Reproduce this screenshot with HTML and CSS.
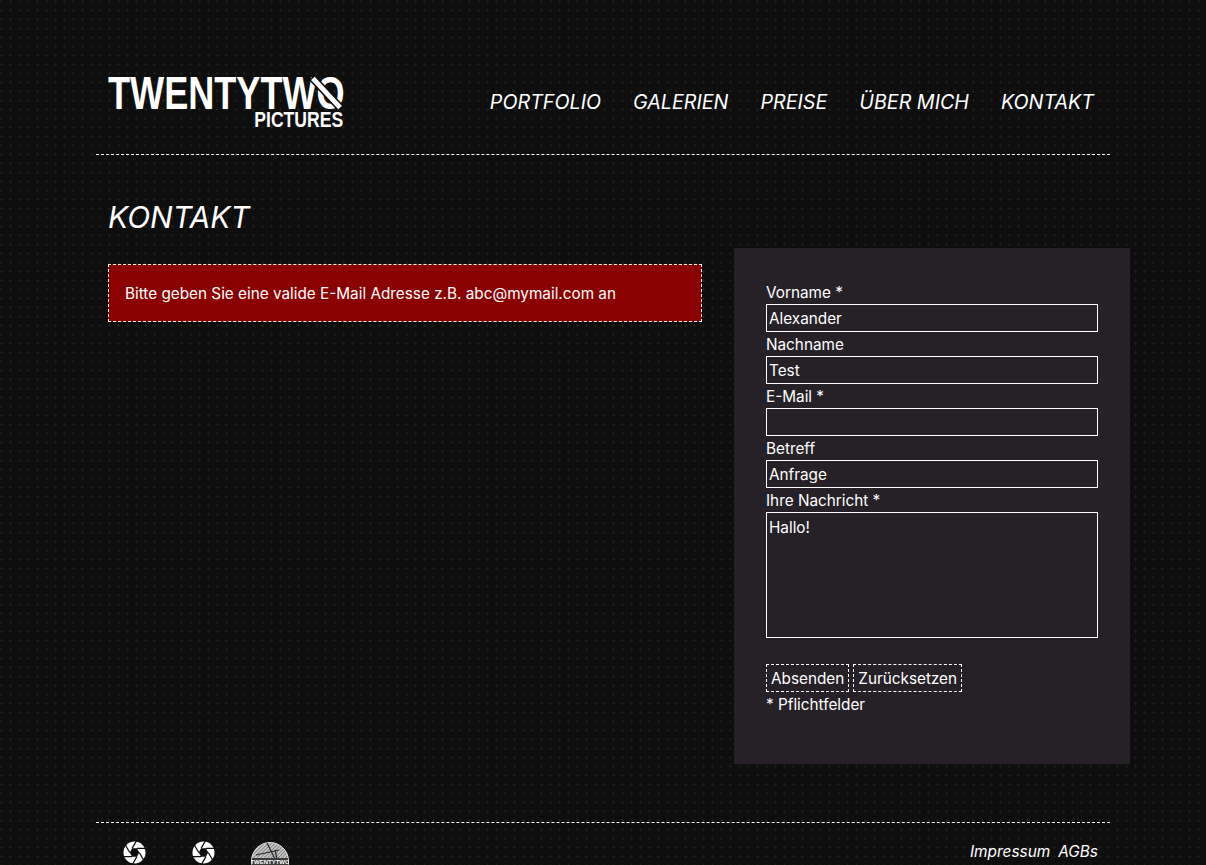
FILE: index.html
```html
<!DOCTYPE html>
<html lang="de">
<head>
<meta charset="utf-8">
<title>Kontakt</title>
<link rel="stylesheet" href="styles.css">
</head>
<body>
<div class="page">
  <header class="site-header">
    <a class="logo" href="#"><span class="logo-main">TWENTYTWO</span><span class="logo-sub">PICTURES</span></a>
    <nav class="nav">
      <a href="#">PORTFOLIO</a><a href="#">GALERIEN</a><a href="#">PREISE</a><a href="#">ÜBER MICH</a><a href="#">KONTAKT</a>
    </nav>
  </header>
  <main class="main">
    <h1 class="title">KONTAKT</h1>
    <div class="columns">
      <div class="left">
        <div class="alert">Bitte geben Sie eine valide E-Mail Adresse z.B. abc@mymail.com an</div>
      </div>
      <form class="form">
        <label class="label">Vorname *</label>
        <input class="field" type="text" value="Alexander">
        <label class="label">Nachname</label>
        <input class="field" type="text" value="Test">
        <label class="label">E-Mail *</label>
        <input class="field" type="text" value="">
        <label class="label">Betreff</label>
        <input class="field" type="text" value="Anfrage">
        <label class="label">Ihre Nachricht *</label>
        <textarea class="field area">Hallo!</textarea>
        <div class="buttons">
          <button class="btn" type="button">Absenden</button>
          <button class="btn" type="button">Zurücksetzen</button>
        </div>
        <div class="note">* Pflichtfelder</div>
      </form>
    </div>
  </main>
  <footer class="footer">
    <div class="badges">
      <svg class="aperture" viewBox="0 0 24 24"><circle cx="12" cy="12" r="11.5" fill="#fff"/><path d="M17 12 22 20.66M14.5 16.33 9.5 25M9.5 16.33H-.5M7 12 2 3.34M9.500 7.67 14.500 -1M14.5 7.67H24.500" stroke="#0d0d0d" stroke-width="1.3" fill="none"/><path d="M17 12 14.5 16.33H9.500L7 12 9.500 7.67H14.500Z" fill="#0d0d0d"/></svg>
      <svg class="aperture" viewBox="0 0 24 24"><circle cx="12" cy="12" r="11.5" fill="#fff"/><path d="M17 12 22 20.66M14.5 16.33 9.5 25M9.5 16.33H-.5M7 12 2 3.34M9.500 7.67 14.500 -1M14.5 7.67H24.500" stroke="#0d0d0d" stroke-width="1.3" fill="none"/><path d="M17 12 14.5 16.33H9.500L7 12 9.500 7.67H14.500Z" fill="#0d0d0d"/></svg>
      <svg class="seal" viewBox="0 0 38 38"><defs><pattern id="hatch" width="2.500" height="2.500" patternUnits="userSpaceOnUse" patternTransform="rotate(45)"><rect width="2.500" height="2.500" fill="#cfcfcf"/><rect width="1" height="2.500" fill="#7c7c7c"/></pattern></defs><circle cx="19" cy="19" r="18.500" fill="url(#hatch)" stroke="#ddd"/><path d="M5 13 28 8M16 1 24 17M24 8 27 21" stroke="#2a2a2a" stroke-width="1.200" fill="none"/><rect x="1" y="16" width="36" height="7" fill="#3a3a3a"/><text class="seal-text" x="19" y="22" text-anchor="middle">TWENTYTWO</text></svg>
    </div>
    <div class="legal"><a href="#">Impressum</a><a href="#">AGBs</a></div>
  </footer>
</div>
</body>
</html>
```
FILE: styles.css
```css
* { box-sizing: border-box; }
html, body { margin: 0; height: 865px; overflow: hidden; }
body {
  background-color: #0e0e0e;
  background-image: radial-gradient(circle at 1.5px 1.5px, #1e1e1e 1px, transparent 1.3px);
  background-size: 9px 9px;
  color: #fff;
  font-family: Inter, "Noto Sans", sans-serif;
  font-size: 15.3px;
}
a { color: inherit; text-decoration: none; }
.page { width: 1014px; margin-left: 96px; }
.site-header {
  height: 155px;
  border-bottom: 1px dashed #fff;
  padding: 76px 16px 0 12px;
  display: flex;
  justify-content: space-between;
  align-items: flex-start;
}
.logo { position: relative; display: flex; flex-direction: column; width: 236px; font-family: "Liberation Sans", sans-serif; font-weight: 700; }
.logo::after {
  content: "";
  position: absolute;
  left: 216px; top: -3px;
  width: 5px; height: 40px;
  background: #fff;
  box-shadow: 0 0 0 1.5px #0e0e0e;
  transform: rotate(-43deg);
}
.logo-main { font-size: 46px; height: 34px; line-height: 34px; white-space: nowrap; transform: scaleX(.785); transform-origin: 0 0; }
.logo-sub { margin: 2px 1px 0 0; font-size: 22px; height: 16px; line-height: 16px; white-space: nowrap; align-self: flex-end; transform: scaleX(.8); transform-origin: 100% 0; }
.nav { display: flex; gap: 32px; padding-top: 14px; font-size: 19.7px; font-style: italic; line-height: 24px; }
.main { padding: 0; }
.title { margin: 46px 0 0 12px; font-size: 30px; line-height: 32px; height: 47px; font-weight: 400; font-style: italic; }
.columns { display: flex; height: 516px; }
.left { flex: none; width: 638px; padding: 16px 0 0 12px; }
.alert {
  width: 594px; height: 58px;
  background: #8b0000;
  border: 1px dashed #fff;
  padding: 0 16px;
  display: flex; align-items: center;
}
.form {
  flex: none;
  width: 396px;
  background: #262127;
  padding: 32px 32px 0;
  display: flex; flex-direction: column;
}
.label { height: 24px; line-height: 25px; }
.field {
  display: block; width: 332px; height: 28px;
  background: transparent; border: 1px solid #fff; color: #fff;
  font: inherit; padding: 0 2px; margin: 0;
  outline: 0;
}
.area { height: 126px; padding-top: 5px; resize: none; line-height: 20px; }
.buttons { display: flex; gap: 4px; margin-top: 26px; }
.btn {
  height: 28px; padding: 0 4px;
  background: transparent; border: 1px dashed #fff; color: #fff;
  font: inherit;
}
.note { height: 24px; line-height: 25px; }
.footer {
  margin-top: 58px;
  border-top: 1px dashed #fff;
  padding: 18px 12px 0 27px;
  display: flex; justify-content: space-between; align-items: flex-start;
}
.badges { display: flex; align-items: flex-start; }
.aperture { width: 23px; height: 23px; margin-right: 46px; }
.aperture + .seal { margin-left: -10px; margin-top: 1px; }
.seal { width: 38px; height: 38px; }
.seal-text { fill: #fff; font-size: 6px; font-weight: 700; font-family: "Liberation Sans", sans-serif; }
.legal { display: flex; gap: 8px; font-style: italic; font-size: 15.4px; line-height: 22px; }
```
